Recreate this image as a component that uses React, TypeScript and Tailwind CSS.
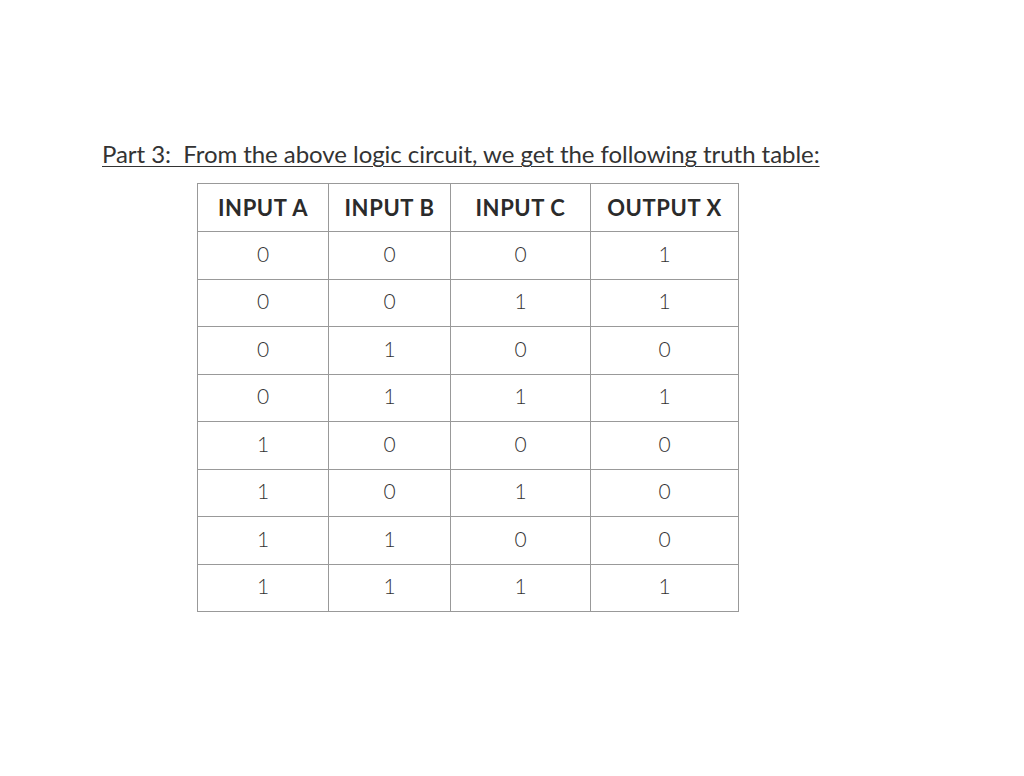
const rows = [
  [0, 0, 0, 1],
  [0, 0, 1, 1],
  [0, 1, 0, 0],
  [0, 1, 1, 1],
  [1, 0, 0, 0],
  [1, 0, 1, 0],
  [1, 1, 0, 0],
  [1, 1, 1, 1],
]

const headers = ["INPUT A", "INPUT B", "INPUT C", "OUTPUT X"]
const widths = ["w-[131px]", "w-[122px]", "w-[140px]", "w-[148px]"]

export default function App() {
  return (
    <div className="w-[1024px] h-[776px] bg-white text-[#333] font-['Lato','Liberation_Sans',sans-serif]">
      <div className="pt-[136px] pl-[102px]">
        <p className="text-[24px] leading-[36px] underline decoration-1 underline-offset-[3px] tracking-[-0.05px] whitespace-pre">
          Part 3:  From the above logic circuit, we get the following truth table:
        </p>
      </div>
      <table className="ml-[197px] mt-[11px] border-collapse table-fixed">
        <thead>
          <tr className="h-[48px]">
            {headers.map((h, i) => (
              <th key={h} className={`${widths[i]} border border-[#999] text-[22px] font-bold tracking-[0.6px] text-[#2b2b2b] text-center`}>
                {h}
              </th>
            ))}
          </tr>
        </thead>
        <tbody>
          {rows.map((r, ri) => (
            <tr key={ri} className="h-[47.5px]">
              {r.map((v, ci) => (
                <td key={ci} className="border border-[#999] pb-[4px] text-[21px] font-light text-center">
                  {v}
                </td>
              ))}
            </tr>
          ))}
        </tbody>
      </table>
    </div>
  )
}
